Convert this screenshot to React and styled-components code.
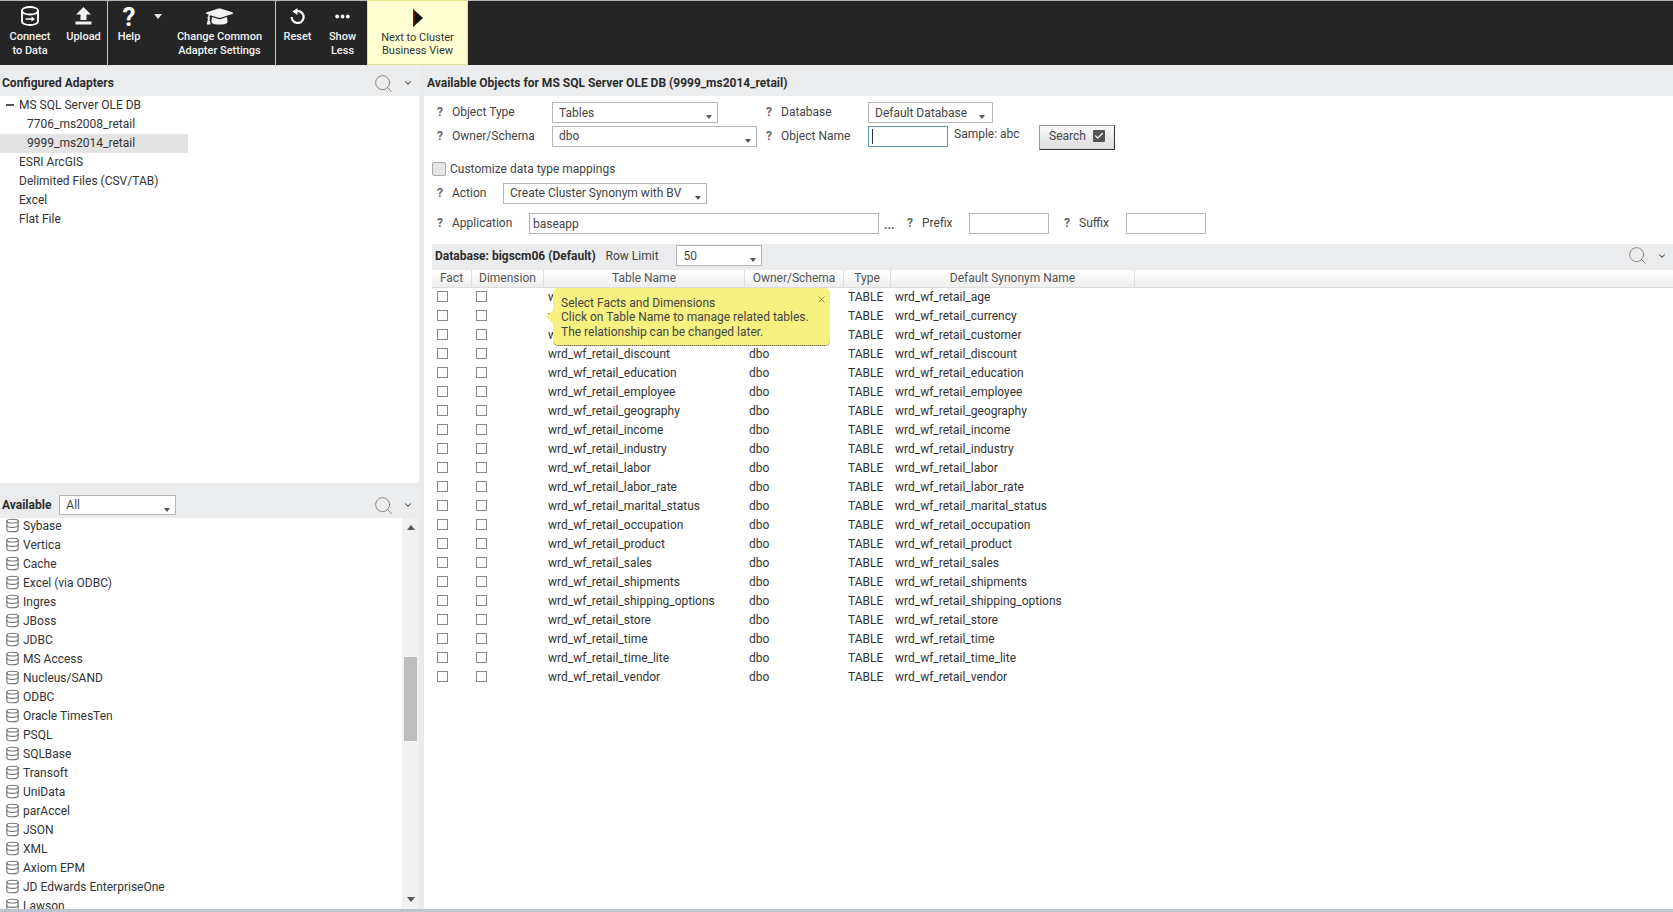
import React from 'react';
import styled, { createGlobalStyle } from 'styled-components';
import { Database, Search, ChevronDown, X, Check } from 'lucide-react';
import { FaGraduationCap } from 'react-icons/fa';

const configured = [
  { label: 'MS SQL Server OLE DB', level: 1, open: true },
  { label: '7706_ms2008_retail', level: 2 },
  { label: '9999_ms2014_retail', level: 2, selected: true },
  { label: 'ESRI ArcGIS', level: 1 },
  { label: 'Delimited Files (CSV/TAB)', level: 1 },
  { label: 'Excel', level: 1 },
  { label: 'Flat File', level: 1 },
];

const available = [
  'Sybase', 'Vertica', 'Cache', 'Excel (via ODBC)', 'Ingres', 'JBoss', 'JDBC', 'MS Access',
  'Nucleus/SAND', 'ODBC', 'Oracle TimesTen', 'PSQL', 'SQLBase', 'Transoft', 'UniData',
  'parAccel', 'JSON', 'XML', 'Axiom EPM', 'JD Edwards EnterpriseOne', 'Lawson',
];

const tables = [
  'age', 'currency', 'customer', 'discount', 'education', 'employee', 'geography', 'income',
  'industry', 'labor', 'labor_rate', 'marital_status', 'occupation', 'product', 'sales',
  'shipments', 'shipping_options', 'store', 'time', 'time_lite', 'vendor',
];

const columns = [
  { title: 'Fact', width: 40 },
  { title: 'Dimension', width: 72 },
  { title: 'Table Name', width: 201 },
  { title: 'Owner/Schema', width: 99 },
  { title: 'Type', width: 47 },
  { title: 'Default Synonym Name', width: 244 },
];

const GlobalStyle = createGlobalStyle`
  html, body {
    margin: 0;
    height: 100%;
    overflow: hidden;
    background: #fff;
  }
  body {
    font-family: Roboto, "Liberation Sans", sans-serif;
    font-size: 12px;
    color: #333;
  }
`;

const Page = styled.div`
  width: 1673px;
  height: 912px;
  display: flex;
  flex-direction: column;
  overflow: hidden;
`;

const Toolbar = styled.div`
  height: 65px;
  flex: none;
  display: flex;
  align-items: stretch;
  background: #252525;
  border-top: 1px solid #b5b5b5;
  box-sizing: border-box;
`;

const ToolGroup = styled.div`
  display: flex;
  width: ${(p) => p.$width}px;
  flex: none;
  box-sizing: border-box;
  border-right: ${(p) => (p.$divider ? '1px solid #c8c8c8' : 'none')};
`;

const ToolButton = styled.div`
  width: ${(p) => p.$width}px;
  flex: none;
  display: flex;
  flex-direction: column;
  align-items: center;
  color: #f2f2f2;
  font-size: 11px;
  font-weight: 500;
  line-height: 14px;
  text-align: center;
`;

const ToolIcon = styled.div`
  height: 28px;
  display: flex;
  align-items: center;
  justify-content: center;
  padding-top: 1px;
`;

const HelpGlyph = styled.span`
  font-size: 26px;
  font-weight: 700;
  line-height: 29px;
  color: #fff;
  padding-top: 3px;
`;

const Caret = styled.span`
  width: 0;
  height: 0;
  margin: 13px 2px 0 ${(p) => p.$left || 0}px;
  border-left: 4px solid transparent;
  border-right: 4px solid transparent;
  border-top: 5px solid #e8e8e8;
`;

const NextButton = styled.div`
  width: 101px;
  height: 65px;
  margin-top: -1px;
  flex: none;
  box-sizing: border-box;
  background: #ffffd2;
  border: 1px solid #e3e28f;
  display: flex;
  flex-direction: column;
  align-items: center;
  color: #333;
  font-size: 11px;
  line-height: 13px;
  text-align: center;
`;

const NextIcon = styled.div`
  height: 30px;
  padding-top: 8px;
  box-sizing: border-box;
`;

const Body = styled.div`
  flex: 1;
  min-height: 0;
  display: flex;
  border-bottom: 3px solid #bcc5d0;
`;

const LeftColumn = styled.div`
  width: 424px;
  box-sizing: border-box;
  flex: none;
  display: flex;
  flex-direction: column;
  border-right: 5px solid #e9eaec;
`;

const PaneBar = styled.div`
  height: ${(p) => p.$height}px;
  flex: none;
  display: flex;
  align-items: center;
  gap: ${(p) => p.$gap || 0}px;
  background: #ebecee;
  box-sizing: border-box;
  padding: ${(p) => p.$top || 0}px 6px ${(p) => p.$bottom || 0}px ${(p) => p.$left || 2}px;
`;

const BarTitle = styled.span`
  font-weight: 700;
  font-size: 12px;
  color: #2c2c2c;
`;

const BarTools = styled.div`
  margin-left: auto;
  display: flex;
  align-items: center;
  gap: 9px;
  color: #777;
`;

const TreePane = styled.div`
  height: 387px;
  flex: none;
  box-sizing: border-box;
`;

const TreeRow = styled.div`
  height: 19px;
  line-height: 18px;
  width: 188px;
  box-sizing: border-box;
  white-space: nowrap;
  padding-left: ${(p) => (p.$level === 2 ? 27 : 19)}px;
  background: ${(p) => (p.$selected ? '#e4e4e4' : 'transparent')};
  position: relative;
`;

const Minus = styled.span`
  position: absolute;
  left: 6px;
  top: 8px;
  width: 8px;
  height: 2px;
  background: #555;
`;

const ListPane = styled.div`
  flex: 1;
  min-height: 0;
  display: flex;
`;

const AvailableList = styled.div`
  flex: 1;
  overflow: hidden;
`;

const ListRow = styled.div`
  height: 19px;
  display: flex;
  align-items: center;
  gap: 3px;
  padding-left: 5px;
  white-space: nowrap;
  color: #333;
  &:first-child {
    margin-top: -2px;
  }
  svg {
    color: #6f6f6f;
    flex: none;
  }
`;

const ScrollTrack = styled.div`
  width: 17px;
  flex: none;
  background: #f1f1f1;
  display: flex;
  flex-direction: column;
  align-items: center;
`;

const ScrollArrow = styled.span`
  width: 0;
  height: 0;
  border-left: 4px solid transparent;
  border-right: 4px solid transparent;
  ${(p) => (p.$up ? 'border-bottom: 5px solid #555; margin-top: 7px;' : 'border-top: 5px solid #555; margin-bottom: 7px;')}
`;

const ScrollThumb = styled.div`
  width: 13px;
  height: 84px;
  margin-top: 127px;
  margin-bottom: auto;
  background: #bdbdbd;
`;

const RightColumn = styled.div`
  flex: 1;
  min-width: 0;
  display: flex;
  flex-direction: column;
  position: relative;
`;

const Form = styled.div`
  height: 148px;
  flex: none;
  box-sizing: border-box;
  padding: 6px 0 0 8px;
  display: flex;
  flex-direction: column;
`;

const FormRow = styled.div`
  display: flex;
  align-items: flex-start;
  height: ${(p) => p.$height}px;
  line-height: ${(p) => p.$line || 20}px;
  flex: none;
`;

const Hint = styled.span`
  width: 20px;
  flex: none;
  padding-left: 5px;
  box-sizing: border-box;
  font-weight: 700;
  color: #666;
`;

const Label = styled.span`
  width: ${(p) => p.$width}px;
  flex: none;
  color: #444;
  white-space: nowrap;
`;

const Field = styled.div`
  width: ${(p) => p.$width}px;
  height: ${(p) => p.$height || 21}px;
  flex: none;
  margin-left: ${(p) => p.$left || 0}px;
  margin-right: ${(p) => p.$right || 0}px;
  box-sizing: border-box;
  border: 1px solid ${(p) => (p.$focus ? '#5f93b4' : '#b5b5b5')};
  background: #fff;
  display: flex;
  align-items: center;
  padding-left: ${(p) => p.$pad ?? 6}px;
  position: relative;
  color: #444;
  white-space: nowrap;
`;

const SelectCaret = styled.span`
  position: absolute;
  right: ${(p) => p.$right || 5}px;
  top: 12px;
  width: 0;
  height: 0;
  border-left: 3.5px solid transparent;
  border-right: 3.5px solid transparent;
  border-top: 4px solid #555;
`;

const TextCursor = styled.span`
  width: 1px;
  height: 15px;
  background: #333;
`;

const Sample = styled.span`
  width: 85px;
  flex: none;
  margin-left: 6px;
  line-height: 17px;
  color: #444;
`;

const SearchButton = styled.div`
  width: 76px;
  height: 25px;
  margin-top: -1px;
  padding-bottom: 3px;
  box-sizing: border-box;
  border: 1px solid #333;
  border-top-color: #999;
  border-left-color: #999;
  background: linear-gradient(#fafafa, #dcdcdc);
  display: flex;
  align-items: center;
  justify-content: center;
  gap: 7px;
  color: #444;
`;

const CheckMark = styled.span`
  width: 12px;
  height: 12px;
  background: #555;
  color: #fff;
  display: flex;
  align-items: center;
  justify-content: center;
  border-radius: 1px;
`;

const CustomCheck = styled.span`
  width: 12px;
  height: 12px;
  border: 1px solid #aaa;
  border-radius: 2px;
  background: #e5e5e5;
  margin-right: 4px;
  flex: none;
`;

const CheckRow = styled(FormRow)`
  align-items: center;
  padding-bottom: 9px;
  box-sizing: border-box;
  color: #444;
`;

const Dots = styled.span`
  width: 23px;
  flex: none;
  padding-left: 5px;
  box-sizing: border-box;
  font-weight: 700;
  line-height: 24px;
  color: #555;
`;

const GridBar = styled(PaneBar)`
  margin-left: 8px;
`;

const RowLimit = styled.span`
  margin-left: 10px;
  color: #444;
`;

const GridHead = styled.div`
  height: 18px;
  flex: none;
  display: flex;
  margin-left: 8px;
  box-sizing: border-box;
  background: linear-gradient(#fff, #eee);
  border-bottom: 1px solid #ddd;
`;

const HeadCell = styled.div`
  width: ${(p) => p.$width}px;
  flex: none;
  box-sizing: border-box;
  border-right: 1px solid #ddd;
  text-align: center;
  line-height: 16px;
  color: #555;
`;

const GridBody = styled.div`
  position: relative;
  margin-left: 8px;
  flex: 1;
`;

const GridRow = styled.div`
  height: 19px;
  display: flex;
  align-items: center;
  white-space: nowrap;
  &:first-child {
    margin-top: -1px;
  }
`;

const Cell = styled.div`
  width: ${(p) => p.$width}px;
  flex: none;
  box-sizing: border-box;
  padding-left: ${(p) => p.$pad ?? 4}px;
  color: #333;
  display: flex;
  align-items: center;
`;

const Box = styled.span`
  width: 11px;
  height: 11px;
  box-sizing: border-box;
  border: 1px solid #888;
  background: #fff;
`;

const Tip = styled.div`
  position: absolute;
  left: 121px;
  top: 0;
  width: 277px;
  height: 58px;
  box-sizing: border-box;
  padding: 8px 0 0 8px;
  background: #f7f181;
  border-radius: 5px;
  border-bottom: 1px dotted #333;
  line-height: 14.4px;
  color: #444;
  white-space: nowrap;
  &::before {
    content: '';
    position: absolute;
    left: -7px;
    top: 22px;
    border-top: 7px solid transparent;
    border-bottom: 7px solid transparent;
    border-right: 7px solid #f7f181;
  }
`;

const TipClose = styled.span`
  position: absolute;
  right: 3px;
  top: 6px;
  color: #6f6f50;
  display: flex;
`;

const ConnectIcon = () => (
  <svg width="18" height="20" viewBox="0 0 18 20" fill="none" stroke="#fff" strokeWidth="1.9">
    <path d="M1 4.500C1 2.500 4.500 1 9 1s8 1.500 8 3.500v11c0 2-3.500 3.500-8 3.500s-8-1.500-8-3.500z" />
    <path d="M1 5c0 2 3.500 3.500 8 3.500S17 7 17 5" />
    <path d="M4.500 13H11" strokeWidth="1.500" />
    <path d="M10.500 10.500 14 13l-3.500 2.500z" fill="#fff" stroke="none" />
  </svg>
);

const UploadIcon = () => (
  <svg width="17" height="18" viewBox="0 0 17 18" fill="#f2f2f2">
    <path d="M8.500 0 16 7.500h-4.500V13h-6V7.500H1z" />
    <rect x="0.500" y="14.500" width="16" height="3" />
  </svg>
);

const ResetIcon = () => (
  <svg width="15" height="17" viewBox="0 0 15 17" fill="none" stroke="#fff" strokeWidth="2.2">
    <path d="M4 4.200A6 6 0 1 1 1.600 9" />
    <path d="M7.500 0v7L2.500 3.500z" fill="#fff" stroke="none" />
  </svg>
);

const MoreIcon = () => (
  <svg width="15" height="5" viewBox="0 0 15 5" fill="#fff">
    <circle cx="2.200" cy="2.500" r="1.900" />
    <circle cx="7.500" cy="2.500" r="1.900" />
    <circle cx="12.800" cy="2.500" r="1.900" />
  </svg>
);

const PlayIcon = () => (
  <svg width="10" height="18" viewBox="0 0 10 18">
    <path d="M0 0 10 9 0 18z" fill="#111" />
    <path d="M0 0 2 1.800V16.200L0 18z" fill="#5a1a10" />
  </svg>
);

const PaneTools = () => (
  <BarTools>
    <Search size={21} strokeWidth={1} />
    <ChevronDown size={10} strokeWidth={2.5} color="#444" />
  </BarTools>
);

const Select = ({ width, value, right, caret }) => (
  <Field $width={width} $right={right}>
    {value}
    <SelectCaret $right={caret} />
  </Field>
);

const App = () => (
  <Page>
    <GlobalStyle />
    <Toolbar>
      <ToolGroup $width={108} $divider>
        <ToolButton $width={60}>
          <ToolIcon><ConnectIcon /></ToolIcon>
          Connect<br />to Data
        </ToolButton>
        <ToolButton $width={47}>
          <ToolIcon><UploadIcon /></ToolIcon>
          Upload
        </ToolButton>
      </ToolGroup>
      <ToolGroup $width={168} $divider>
        <ToolButton $width={42}>
          <ToolIcon><HelpGlyph>?</HelpGlyph></ToolIcon>
          Help
        </ToolButton>
        <Caret $left={4} />
        <ToolButton $width={111}>
          <ToolIcon><FaGraduationCap size={27} color="#f2f2f2" /></ToolIcon>
          Change Common<br />Adapter Settings
        </ToolButton>
      </ToolGroup>
      <ToolGroup $width={91}>
        <ToolButton $width={43}>
          <ToolIcon><ResetIcon /></ToolIcon>
          Reset
        </ToolButton>
        <ToolButton $width={47}>
          <ToolIcon><MoreIcon /></ToolIcon>
          Show<br />Less
        </ToolButton>
      </ToolGroup>
      <NextButton>
        <NextIcon><PlayIcon /></NextIcon>
        Next to Cluster<br />Business View
      </NextButton>
    </Toolbar>
    <Body>
      <LeftColumn>
        <PaneBar $height={31} $top={5}>
          <BarTitle>Configured Adapters</BarTitle>
          <PaneTools />
        </PaneBar>
        <TreePane>
          {configured.map((item) => (
            <TreeRow key={item.label} $level={item.level} $selected={item.selected}>
              {item.open && <Minus />}
              {item.label}
            </TreeRow>
          ))}
        </TreePane>
        <PaneBar $height={35} $gap={8} $top={9}>
          <BarTitle>Available</BarTitle>
          <Field $width={117} $height={20}>
            All
            <SelectCaret $right={5} />
          </Field>
          <PaneTools />
        </PaneBar>
        <ListPane>
          <AvailableList>
            {available.map((name) => (
              <ListRow key={name}>
                <Database size={15} strokeWidth={1.7} />
                {name}
              </ListRow>
            ))}
          </AvailableList>
          <ScrollTrack>
            <ScrollArrow $up />
            <ScrollThumb />
            <ScrollArrow />
          </ScrollTrack>
        </ListPane>
      </LeftColumn>
      <RightColumn>
        <PaneBar $height={31} $left={3} $top={4}>
          <BarTitle>Available Objects for MS SQL Server OLE DB (9999_ms2014_retail)</BarTitle>
        </PaneBar>
        <Form>
          <FormRow $height={24}>
            <Hint>?</Hint>
            <Label $width={100}>Object Type</Label>
            <Select width={166} value="Tables" right={43} />
            <Hint>?</Hint>
            <Label $width={87}>Database</Label>
            <Select width={125} value="Default Database" caret={7} />
          </FormRow>
          <FormRow $height={37} $line={21}>
            <Hint>?</Hint>
            <Label $width={100}>Owner/Schema</Label>
            <Select width={205} value="dbo" right={4} />
            <Hint>?</Hint>
            <Label $width={87}>Object Name</Label>
            <Field $width={80} $focus $pad={3}><TextCursor /></Field>
            <Sample>Sample: abc</Sample>
            <SearchButton>
              Search
              <CheckMark><Check size={10} strokeWidth={3} /></CheckMark>
            </SearchButton>
          </FormRow>
          <CheckRow $height={20}>
            <CustomCheck />
            Customize data type mappings
          </CheckRow>
          <FormRow $height={30} $line={21}>
            <Hint>?</Hint>
            <Label $width={51}>Action</Label>
            <Select width={204} value="Create Cluster Synonym with BV" />
          </FormRow>
          <FormRow $height={30}>
            <Hint>?</Hint>
            <Label $width={77}>Application</Label>
            <Field $width={350} $pad={3}>baseapp</Field>
            <Dots>...</Dots>
            <Hint>?</Hint>
            <Label $width={47}>Prefix</Label>
            <Field $width={80} $right={10} />
            <Hint>?</Hint>
            <Label $width={47}>Suffix</Label>
            <Field $width={80} />
          </FormRow>
        </Form>
        <GridBar $height={26} $left={3} $bottom={3}>
          <BarTitle>Database: bigscm06 (Default)</BarTitle>
          <RowLimit>Row Limit</RowLimit>
          <Field $width={86} $height={21} $left={17} $pad={7}>
            50
            <SelectCaret $right={5} />
          </Field>
          <PaneTools />
        </GridBar>
        <GridHead>
          {columns.map((col) => (
            <HeadCell key={col.title} $width={col.width}>{col.title}</HeadCell>
          ))}
        </GridHead>
        <GridBody>
          {tables.map((name) => (
            <GridRow key={name}>
              <Cell $width={columns[0].width} $pad={5}><Box /></Cell>
              <Cell $width={columns[1].width} $pad={4}><Box /></Cell>
              <Cell $width={columns[2].width}>wrd_wf_retail_{name}</Cell>
              <Cell $width={columns[3].width}>dbo</Cell>
              <Cell $width={columns[4].width}>TABLE</Cell>
              <Cell $width={columns[5].width}>wrd_wf_retail_{name}</Cell>
            </GridRow>
          ))}
          <Tip>
            Select Facts and Dimensions<br />
            Click on Table Name to manage related tables.<br />
            The relationship can be changed later.
            <TipClose><X size={11} strokeWidth={1.5} /></TipClose>
          </Tip>
        </GridBody>
      </RightColumn>
    </Body>
  </Page>
);

export default App;
